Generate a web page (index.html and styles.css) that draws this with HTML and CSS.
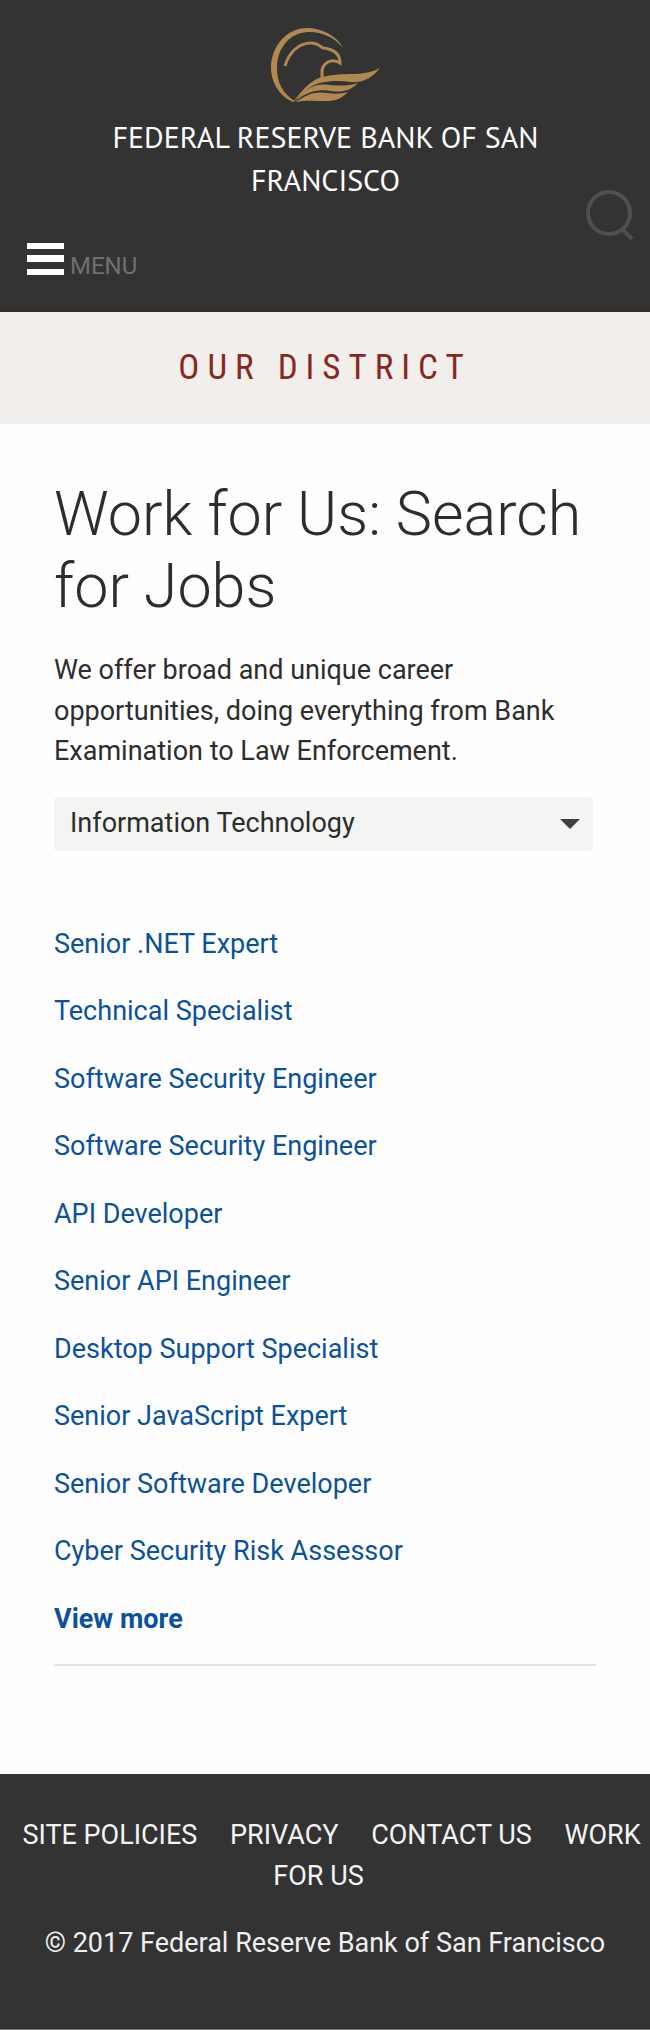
FILE: index.html
```html
<!DOCTYPE html>
<html lang="en">
<head>
<meta charset="utf-8">
<meta name="viewport" content="width=device-width, initial-scale=1">
<title>Work for Us: Search for Jobs</title>
<link rel="stylesheet" href="styles.css">
</head>
<body>
<header class="site-header">
  <a class="brand" href="#">
    <svg class="brand-logo" viewBox="0 0 110 76" aria-hidden="true">
      <path d="M22 74C8 68 0 54 0 40C0 18 16 0 36 0C51 0 66 8 72 20C64 10 52 4 38 4C20 4 6 19 6 40C6 55 12 66 24 73Z"/>
      <path class="line" d="M14 38C18 24 28 15 40 15C46 15 49 18 52 20C62 21 69 25 69 35C60 29 51 36 51 44V51"/>
      <path d="M22 74C31 63 40 50 56 48C78 44 92 49 109 40C101 50 92 55 80 54C64 52 48 53 38 60Z"/>
      <path d="M24 74C35 60 44 55 58 57C70 58 78 58 87 55C80 62 72 65 60 63C48 61 38 64 30 69Z"/>
      <path d="M25 74C36 66 44 63 56 65C64 66 70 66 77 64C70 71 64 73 56 73C45 73 34 72 25 74Z"/>
    </svg>
    <span class="brand-name">FEDERAL RESERVE BANK OF SAN FRANCISCO</span>
  </a>
  <div class="toolbar">
    <button class="menu-button" type="button">
      <svg class="menu-icon" viewBox="0 0 37 32" aria-hidden="true">
        <path d="M0 0h37v6H0zM0 12h37v7H0zM0 26h37v6H0z"/>
      </svg>
      <span>MENU</span>
    </button>
    <button class="search-button" type="button" aria-label="Search">
      <svg class="search-icon" viewBox="0 0 48 50" aria-hidden="true">
        <circle cx="23" cy="23" r="21"/>
        <path d="M36 39L46 49"/>
      </svg>
    </button>
  </div>
</header>
<div class="section-banner">OUR DISTRICT</div>
<main class="content">
  <h1 class="page-title">Work for Us: Search for Jobs</h1>
  <p class="intro">We offer broad and unique career opportunities, doing everything from Bank Examination to Law Enforcement.</p>
  <div class="filter">
    <select class="filter-select" aria-label="Job category">
      <option>Information Technology</option>
    </select>
    <svg class="filter-arrow" viewBox="0 0 20 10" aria-hidden="true"><path d="M0 0h20L10 10z"/></svg>
  </div>
  <ul class="jobs">
    <li><a href="#">Senior .NET Expert</a></li>
    <li><a href="#">Technical Specialist</a></li>
    <li><a href="#">Software Security Engineer</a></li>
    <li><a href="#">Software Security Engineer</a></li>
    <li><a href="#">API Developer</a></li>
    <li><a href="#">Senior API Engineer</a></li>
    <li><a href="#">Desktop Support Specialist</a></li>
    <li><a href="#">Senior JavaScript Expert</a></li>
    <li><a href="#">Senior Software Developer</a></li>
    <li><a href="#">Cyber Security Risk Assessor</a></li>
    <li><a class="more" href="#">View more</a></li>
  </ul>
</main>
<footer class="site-footer">
  <nav class="footer-links">
    <a href="#">SITE POLICIES</a>
    <a href="#">PRIVACY</a>
    <a href="#">CONTACT US</a>
    <a href="#">WORK FOR US</a>
  </nav>
  <p class="copyright">© 2017 Federal Reserve Bank of San Francisco</p>
</footer>
</body>
</html>
```

FILE: styles.css
```css
* {
  box-sizing: border-box;
}

body {
  margin: 0;
  background: #fefefe;
  color: #2d2d2d;
  font: 27px/1.5 Roboto, "Liberation Sans", sans-serif;
}

a {
  color: #0b519c;
  text-decoration: none;
}

button {
  padding: 0;
  border: 0;
  background: none;
  font: inherit;
}

.site-header {
  padding: 28px 16px 26px 27px;
  background: #333;
  border-bottom: 4px solid #372e30;
}

.brand {
  display: flex;
  flex-direction: column;
  align-items: center;
  gap: 11px;
  padding: 0 70px 0 60px;
}

.brand-logo {
  width: 110px;
  height: 76px;
  fill: #b08850;
}

.brand-logo .line {
  fill: none;
  stroke: #b08850;
  stroke-width: 3;
}

.brand-name {
  color: #fff;
  font: 30px/43px "PT Sans", "Noto Sans", sans-serif;
  text-align: center;
}

.toolbar {
  display: flex;
  justify-content: space-between;
  align-items: flex-end;
  margin-top: -11px;
}

.menu-button {
  display: flex;
  align-items: center;
  gap: 6px;
  color: #707070;
  font-size: 24px;
  line-height: 32px;
}

.menu-button span {
  padding-top: 14px;
}

.menu-icon {
  width: 37px;
  height: 32px;
  fill: #fff;
}

.search-button {
  padding-bottom: 42px;
}

.search-icon {
  display: block;
  width: 48px;
  height: 50px;
  fill: none;
  stroke: #505050;
  stroke-width: 4;
}

.section-banner {
  padding: 32px 0;
  background: #f1eeeb;
  color: #85291f;
  font: 35px/48px "Roboto Condensed", Roboto, sans-serif;
  letter-spacing: 8px;
  text-align: center;
}

.content {
  padding: 54px 54px 108px;
}

.page-title {
  margin: 0 0 28px;
  font-size: 61px;
  font-weight: 300;
  line-height: 72px;
}

.intro {
  margin: 0 0 25px;
}

.filter {
  display: grid;
  align-items: center;
  margin-right: 3px;
}

.filter-select,
.filter-arrow {
  grid-area: 1 / 1;
}

.filter-select {
  appearance: none;
  width: 100%;
  height: 54px;
  padding: 0 48px 0 16px;
  border: 0;
  border-radius: 4px;
  background: #f4f5f2;
  color: inherit;
  font: inherit;
}

.filter-arrow {
  justify-self: end;
  width: 20px;
  height: 10px;
  margin-right: 13px;
  fill: #404040;
  pointer-events: none;
}

.jobs {
  display: grid;
  gap: 27px;
  margin: 73px 0 0;
  padding: 0 0 25px;
  border-bottom: 2px solid #e4e4e4;
  list-style: none;
}

.more {
  font-weight: 700;
}

.site-footer {
  padding: 41px 0 65px;
  background: #333;
  border-bottom: 1px solid #777;
  color: #f0f0f0;
  text-align: center;
}

.footer-links a {
  margin: 0 13px;
  color: #f4f4f4;
}

.copyright {
  margin: 27px 0 0;
}
```
